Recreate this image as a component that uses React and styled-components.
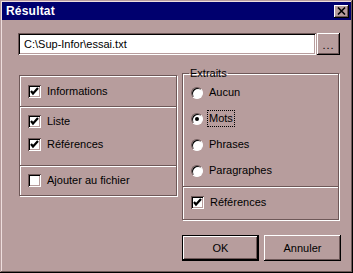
import React from "react";
import styled, { createGlobalStyle } from "styled-components";

const BG = "#b79d9d";
const DARK = "#6e5858";

const Global = createGlobalStyle`
  html, body { margin: 0; padding: 0; background: ${BG}; }
  body { font-family: "Liberation Sans", Arial, sans-serif; font-size: 11px; color: #000; }
`;

const Window = styled.div`
  width: 353px;
  height: 273px;
  box-sizing: border-box;
  padding: 2px;
  background: ${BG};
  box-shadow: inset -1px -1px #000, inset 1px 1px ${BG}, inset -2px -2px ${DARK}, inset 2px 2px #eedede;
  display: flex;
  flex-direction: column;
`;

const TitleBar = styled.div`
  height: 18px;
  background: #00006e;
  display: flex;
  align-items: center;
  justify-content: space-between;
  padding: 0 2px 0 4px;
`;

const Title = styled.span`
  color: #fff;
  font-weight: bold;
  font-size: 12px;
  letter-spacing: 0.2px;
`;

const CloseBtn = styled.div`
  width: 15px;
  height: 13px;
  box-sizing: border-box;
  background: ${BG};
  box-shadow: inset -1px -1px #000, inset 1px 1px #fff, inset -2px -2px ${DARK};
  display: flex;
  align-items: center;
  justify-content: center;
`;

const Body = styled.div`
  padding: 13px 0 0 16px;
  display: flex;
  flex-direction: column;
`;

const PathRow = styled.div`
  display: flex;
  gap: 1px;
  height: 22px;
`;

const PathInput = styled.div`
  width: 298px;
  box-sizing: border-box;
  background: #fff;
  box-shadow: inset 1px 1px ${DARK}, inset -1px -1px #fff, inset 2px 2px #000, inset -2px -2px ${BG};
  display: flex;
  align-items: center;
  padding-left: 6px;
`;

const RaisedButton = styled.div`
  box-sizing: border-box;
  background: ${BG};
  display: flex;
  align-items: center;
  justify-content: center;
  width: ${(p) => p.$w}px;
  height: ${(p) => p.$h}px;
  border: ${(p) => (p.$default ? "1px solid #000" : "none")};
  box-shadow: inset -1px -1px #000, inset 1px 1px #fff, inset -2px -2px ${DARK};
  font-size: 11px;
`;

const Dots = styled.span`
  letter-spacing: 1px;
  margin-top: 2px;
  font-size: 11px;
`;

const Groups = styled.div`
  display: flex;
  gap: 5px;
  margin-top: 19px;
  margin-left: 1px;
  align-items: flex-start;
`;

const LeftGroup = styled.div`
  width: 158px;
  margin-top: 1px;
  box-sizing: border-box;
  border: 1px solid ${DARK};
  box-shadow: inset 1px 1px #fff, 1px 1px #fff;
  display: flex;
  flex-direction: column;
`;

const Section = styled.div`
  box-sizing: border-box;
  height: ${(p) => p.$h}px;
  padding: ${(p) => p.$pad};
  display: flex;
  flex-direction: column;
  gap: ${(p) => p.$gap || 10}px;
  border-top: ${(p) => (p.$divider ? `1px solid ${DARK}` : "none")};
  box-shadow: ${(p) => (p.$divider ? "inset 0 1px #fff" : "none")};
`;

const RightCol = styled.div`
  width: 159px;
  display: flex;
  flex-direction: column;
`;

const Fieldset = styled.fieldset`
  width: 157px;
  height: 153px;
  margin: -7px 0 0 0;
  padding: 0;
  box-sizing: border-box;
  border: 1px solid ${DARK};
  box-shadow: inset 1px 1px #fff, 1px 1px #fff;
  display: flex;
  flex-direction: column;
`;

const Legend = styled.legend`
  margin-left: 6px;
  padding: 0 1px;
  font-size: 11px;
  line-height: 13px;
`;

const Row = styled.label`
  display: flex;
  align-items: center;
  height: 13px;
  gap: 5px;
`;

const Box = styled.span`
  width: 13px;
  height: 13px;
  box-sizing: border-box;
  background: #fff;
  box-shadow: inset 1px 1px ${DARK}, inset -1px -1px #fff, inset 2px 2px #000, inset -2px -2px ${BG};
  display: flex;
  align-items: center;
  justify-content: center;
  flex: none;
`;

const Radio = styled.span`
  width: 12px;
  height: 12px;
  box-sizing: border-box;
  border-radius: 50%;
  background: #fff;
  border-top: 1px solid ${DARK};
  border-left: 1px solid ${DARK};
  border-right: 1px solid #fff;
  border-bottom: 1px solid #fff;
  box-shadow: inset 1px 1px #000;
  display: flex;
  align-items: center;
  justify-content: center;
  flex: none;
`;

const Dot = styled.span`
  width: 4px;
  height: 4px;
  border-radius: 50%;
  background: #000;
`;

const Text = styled.span`
  padding: 1px 1px;
  outline: ${(p) => (p.$focus ? "1px dotted #000" : "none")};
  line-height: 13px;
`;

const Buttons = styled.div`
  display: flex;
  gap: 5px;
  margin-top: 15px;
`;

const Check = () => (
  <svg width="9" height="9" viewBox="0 0 9 9">
    <path d="M1 4 L3 6.5 L8 1" fill="none" stroke="#000" strokeWidth="2.2" />
  </svg>
);

const CheckBox = ({ checked, label }) => (
  <Row>
    <Box>{checked && <Check />}</Box>
    <Text>{label}</Text>
  </Row>
);

const RadioRow = ({ checked, label, focus }) => (
  <Row>
    <Radio>{checked && <Dot />}</Radio>
    <Text $focus={focus}>{label}</Text>
  </Row>
);

export default function App() {
  return (
    <>
      <Global />
      <Window>
        <TitleBar>
          <Title>Résultat</Title>
          <CloseBtn>
            <svg width="9" height="8" viewBox="0 0 9 8">
              <path d="M1 0.5 L8 7.5 M8 0.5 L1 7.5" stroke="#000" strokeWidth="1.6" />
            </svg>
          </CloseBtn>
        </TitleBar>
        <Body>
          <PathRow>
            <PathInput>C:\Sup-Infor\essai.txt</PathInput>
            <RaisedButton $w={23} $h={22}>
              <Dots>...</Dots>
            </RaisedButton>
          </PathRow>
          <Groups>
            <LeftGroup>
              <Section $h={30} $pad="9px 0 0 8px">
                <CheckBox checked label="Informations" />
              </Section>
              <Section $divider $h={59} $pad="8px 0 0 8px">
                <CheckBox checked label="Liste" />
                <CheckBox checked label="Références" />
              </Section>
              <Section $divider $h={30} $pad="8px 0 0 8px">
                <CheckBox label="Ajouter au fichier" />
              </Section>
            </LeftGroup>
            <RightCol>
              <Fieldset>
                <Legend>Extraits</Legend>
                <Section $h={106} $pad="6px 0 0 8px" $gap={13}>
                  <RadioRow label="Aucun" />
                  <RadioRow checked focus label="Mots" />
                  <RadioRow label="Phrases" />
                  <RadioRow label="Paragraphes" />
                </Section>
                <Section $divider $h={33} $pad="9px 0 0 8px">
                  <CheckBox checked label="Références" />
                </Section>
              </Fieldset>
              <Buttons>
                <RaisedButton $default $w={77} $h={26}>OK</RaisedButton>
                <RaisedButton $w={77} $h={26}>Annuler</RaisedButton>
              </Buttons>
            </RightCol>
          </Groups>
        </Body>
      </Window>
    </>
  );
}
